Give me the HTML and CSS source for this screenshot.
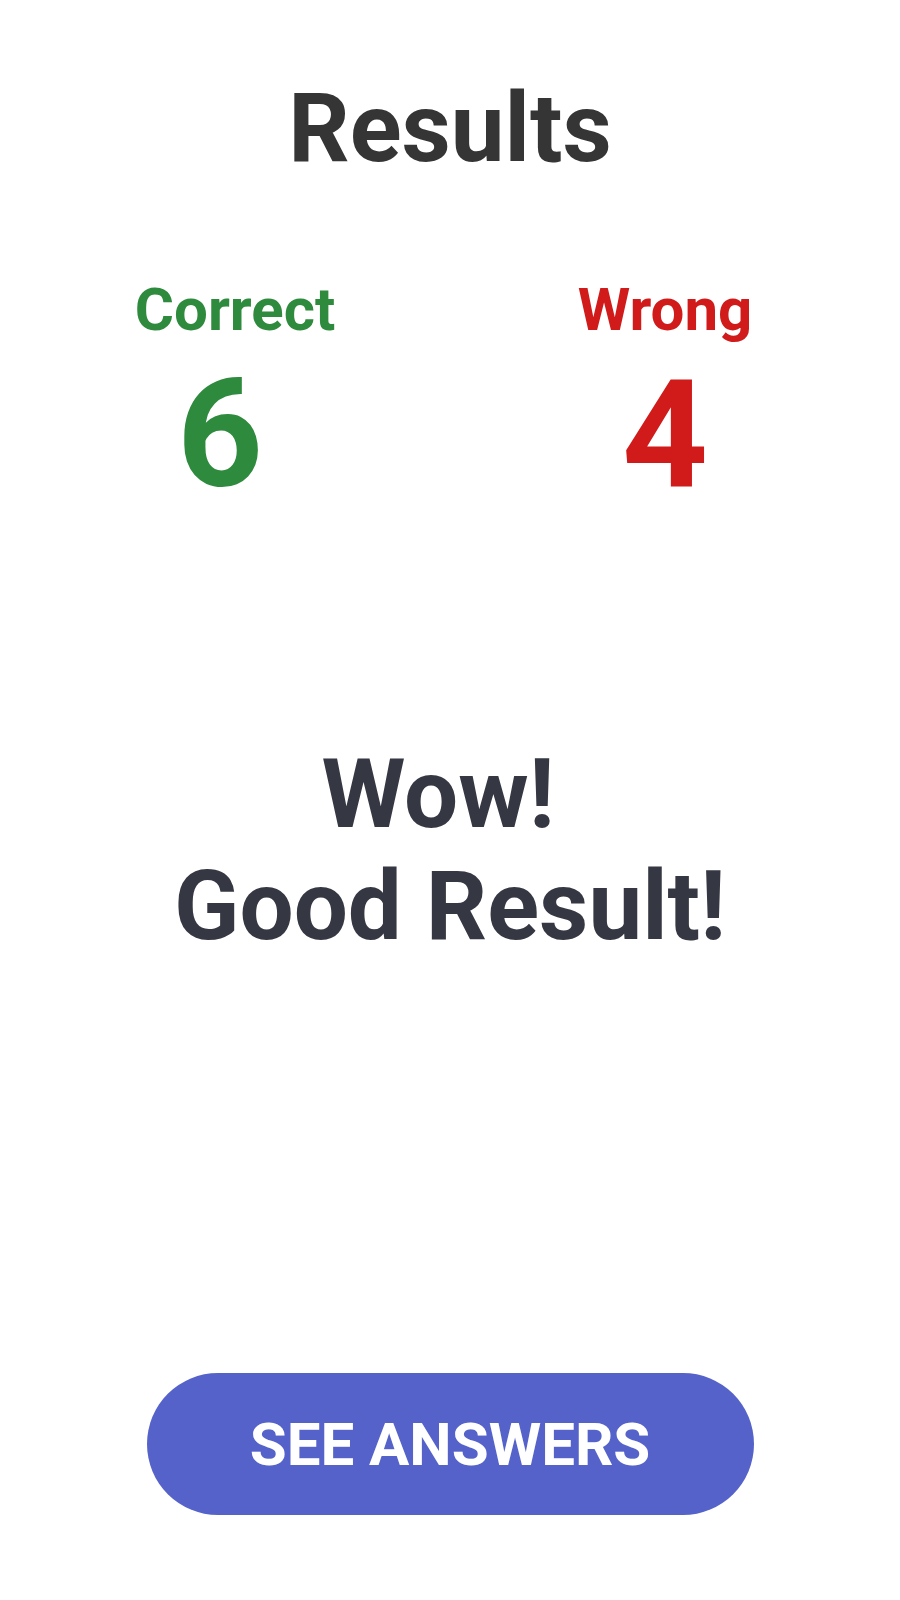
FILE: index.html
```html
<!DOCTYPE html>
<html lang="en">
<head>
<meta charset="utf-8">
<title>Results</title>
<link rel="stylesheet" href="styles.css">
</head>
<body>
<main class="results">
  <h1 class="results__title">Results</h1>
  <section class="scores">
    <div class="score score--correct">
      <div class="score__label">Correct</div>
      <div class="score__value score__value--shift">6</div>
    </div>
    <div class="score score--wrong">
      <div class="score__label">Wrong</div>
      <div class="score__value">4</div>
    </div>
  </section>
  <p class="message">Wow! 
Good Result!</p>
  <button class="answers-btn" type="button">SEE ANSWERS</button>
</main>
</body>
</html>
```
FILE: styles.css
```css
html, body {
  margin: 0;
  padding: 0;
  background: #ffffff;
}

body {
  font-family: Roboto, "Liberation Sans", sans-serif;
  font-weight: 700;
}

.results {
  width: 900px;
  display: flex;
  flex-direction: column;
  align-items: center;
}

.results__title {
  margin: 72px 0 0;
  font-size: 96px;
  line-height: normal;
  font-weight: 700;
  color: #353535;
  text-align: center;
}

.scores {
  margin-top: 90px;
  width: 100%;
  box-sizing: border-box;
  padding: 0 20px;
  display: flex;
}

.score {
  flex: 1;
  display: flex;
  flex-direction: column;
  align-items: center;
  text-align: center;
}

.score__label {
  font-size: 60px;
  line-height: normal;
}

.score__value {
  margin-top: 2px;
  font-size: 150px;
  line-height: normal;
}

.score__value--shift {
  padding-right: 30px;
}

.score--correct {
  color: #2e8a3c;
}

.score--wrong {
  color: #d11b1b;
}

.message {
  margin: 215px 0 0;
  font-size: 96px;
  line-height: normal;
  color: #353743;
  text-align: center;
  white-space: pre;
}

.answers-btn {
  margin-top: 411px;
  width: 607px;
  height: 142px;
  border: none;
  border-radius: 71px;
  background: #5462ca;
  color: #ffffff;
  font-family: Roboto, "Liberation Sans", sans-serif;
  font-weight: 700;
  font-size: 60px;
  padding: 0;
  cursor: pointer;
}
```
